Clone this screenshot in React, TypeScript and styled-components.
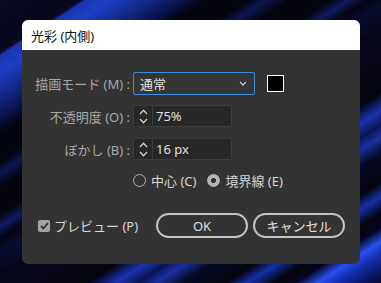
import React from "react";
import styled, { createGlobalStyle } from "styled-components";

const Global = createGlobalStyle`
  html, body { margin: 0; padding: 0; width: 381px; height: 283px; overflow: hidden; }
  body { font-family: "Noto Sans", "Noto Sans CJK JP", sans-serif; }
`;

const Stage = styled.div`
  width: 381px;
  height: 283px;
  box-sizing: border-box;
  padding: 20px 21px 19px 22px;
  display: flex;
  background: linear-gradient(
    147deg,
    #0b0b2a 0px,
    #07071c 30px,
    #08081e 44px,
    #1a35b0 47px,
    #1d3dc6 60px,
    #142a8a 80px,
    #0a1450 98px,
    #04040e 112px,
    #04040e 135px,
    #0c1650 145px,
    #04040e 158px,
    #04040e 180px,
    #0d1a60 190px,
    #050512 200px,
    #0a0c30 212px,
    #06061a 232px,
    #04040e 285px,
    #1a34b0 300px,
    #0a1555 312px,
    #1a30a0 322px,
    #060a25 336px,
    #04040e 360px,
    #1530a8 372px,
    #040410 386px,
    #050520 398px,
    #2850f0 410px,
    #1430b0 420px,
    #0c1a70 432px,
    #08082a 445px
  );
`;

const Dialog = styled.div`
  flex: 1;
  display: flex;
  flex-direction: column;
  border-radius: 6px;
  overflow: hidden;
  background: #333333;
`;

const TitleBar = styled.div`
  height: 30px;
  flex: none;
  background: #ffffff;
  color: #111111;
  font-size: 13px;
  display: flex;
  align-items: center;
  padding-left: 9px;
`;

const Body = styled.div`
  flex: 1;
  padding: 22px 15px 0 12px;
  display: flex;
  flex-direction: column;
`;

const Form = styled.div`
  display: grid;
  grid-template-columns: 96px auto;
  grid-auto-rows: 23px;
  column-gap: 3px;
  row-gap: 10px;
  align-items: center;
`;

const Label = styled.div`
  color: #a8a8a8;
  font-size: 13px;
  text-align: right;
  white-space: nowrap;
`;

const ControlRow = styled.div`
  display: flex;
  align-items: center;
  gap: 12px;
`;

const Select = styled.div`
  width: 122px;
  height: 23px;
  box-sizing: border-box;
  border: 1.5px solid #3a8de0;
  border-radius: 2px;
  background: #353535;
  display: flex;
  align-items: center;
  justify-content: space-between;
  padding: 0 7px 0 6px;
  color: #e2e2e2;
  font-size: 13px;
`;

const Swatch = styled.div`
  width: 17px;
  height: 17px;
  box-sizing: border-box;
  border: 1.5px solid #ffffff;
  background: #000000;
`;

const Spin = styled.div`
  width: 99px;
  height: 22px;
  box-sizing: border-box;
  border: 1px solid #3c3c3c;
  border-radius: 2px;
  background: #272727;
  display: flex;
  align-items: stretch;
  align-self: start;
`;

const Stepper = styled.div`
  width: 18px;
  flex: none;
  border-right: 1px solid #3c3c3c;
  display: flex;
  flex-direction: column;
  align-items: center;
  justify-content: center;
  gap: 3px;
`;

const SpinValue = styled.div`
  flex: 1;
  display: flex;
  align-items: center;
  padding-left: 3px;
  color: #e0e0e0;
  font-size: 13px;
`;

const RadioRow = styled.div`
  grid-column: 2;
  display: flex;
  align-items: center;
  gap: 11px;
  height: 18px;
  align-self: start;
`;

const RadioItem = styled.label`
  display: flex;
  align-items: center;
  gap: 5px;
  color: #d6d6d6;
  font-size: 13px;
`;

const RadioDot = styled.span<{ $on?: boolean }>`
  width: 13px;
  height: 13px;
  box-sizing: border-box;
  border-radius: 50%;
  border: 1.5px solid #b4b4b4;
  background: ${(p) => (p.$on ? "radial-gradient(circle, #2e2e2e 0 2.2px, #b4b4b4 2.8px)" : "transparent")};
`;

const Footer = styled.div`
  margin-top: 19px;
  display: flex;
  align-items: center;
  justify-content: space-between;
`;

const Check = styled.label`
  display: flex;
  align-items: center;
  gap: 4px;
  margin-left: 4px;
  color: #d8d8d8;
  font-size: 13px;
`;

const CheckBox = styled.span`
  width: 12px;
  height: 12px;
  border-radius: 2px;
  background: #a3a3a3;
  display: flex;
  align-items: center;
  justify-content: center;
`;

const Buttons = styled.div`
  display: flex;
  gap: 5px;
`;

const Button = styled.button`
  width: 92px;
  height: 25px;
  box-sizing: border-box;
  border: 2px solid #c4c4c4;
  border-radius: 13px;
  background: transparent;
  color: #e0e0e0;
  font-family: inherit;
  font-size: 13px;
  padding: 0;
  display: flex;
  align-items: center;
  justify-content: center;
`;

const Chevron = ({ up, big }: { up?: boolean; big?: boolean }) =>
  big ? (
    <svg width="9" height="6" viewBox="0 0 9 6">
      <polyline
        points={up ? "1,5 4.5,1.2 8,5" : "1,1 4.5,4.8 8,1"}
        fill="none"
        stroke="#d0d0d0"
        strokeWidth="1.3"
      />
    </svg>
  ) : (
    <svg width="8" height="5" viewBox="0 0 8 5">
      <polyline
        points={up ? "1,4.2 4,1 7,4.2" : "1,0.8 4,4 7,0.8"}
        fill="none"
        stroke="#cfcfcf"
        strokeWidth="1.2"
      />
    </svg>
  );

export default function App() {
  return (
    <>
      <Global />
      <Stage>
        <Dialog>
          <TitleBar>光彩 (内側)</TitleBar>
          <Body>
            <Form>
              <Label>描画モード (M) :</Label>
              <ControlRow>
                <Select>
                  <span>通常</span>
                  <Chevron />
                </Select>
                <Swatch />
              </ControlRow>
              <Label>不透明度 (O) :</Label>
              <Spin>
                <Stepper>
                  <Chevron up big />
                  <Chevron big />
                </Stepper>
                <SpinValue>75%</SpinValue>
              </Spin>
              <Label>ぼかし (B) :</Label>
              <Spin>
                <Stepper>
                  <Chevron up big />
                  <Chevron big />
                </Stepper>
                <SpinValue>16 px</SpinValue>
              </Spin>
              <RadioRow>
                <RadioItem>
                  <RadioDot />
                  中心 (C)
                </RadioItem>
                <RadioItem>
                  <RadioDot $on />
                  境界線 (E)
                </RadioItem>
              </RadioRow>
            </Form>
            <Footer>
              <Check>
                <CheckBox>
                  <svg width="9" height="8" viewBox="0 0 9 8">
                    <polyline points="1,4 3.4,6.4 8,1.2" fill="none" stroke="#333" strokeWidth="1.8" />
                  </svg>
                </CheckBox>
                プレビュー (P)
              </Check>
              <Buttons>
                <Button>OK</Button>
                <Button>キャンセル</Button>
              </Buttons>
            </Footer>
          </Body>
        </Dialog>
      </Stage>
    </>
  );
}
